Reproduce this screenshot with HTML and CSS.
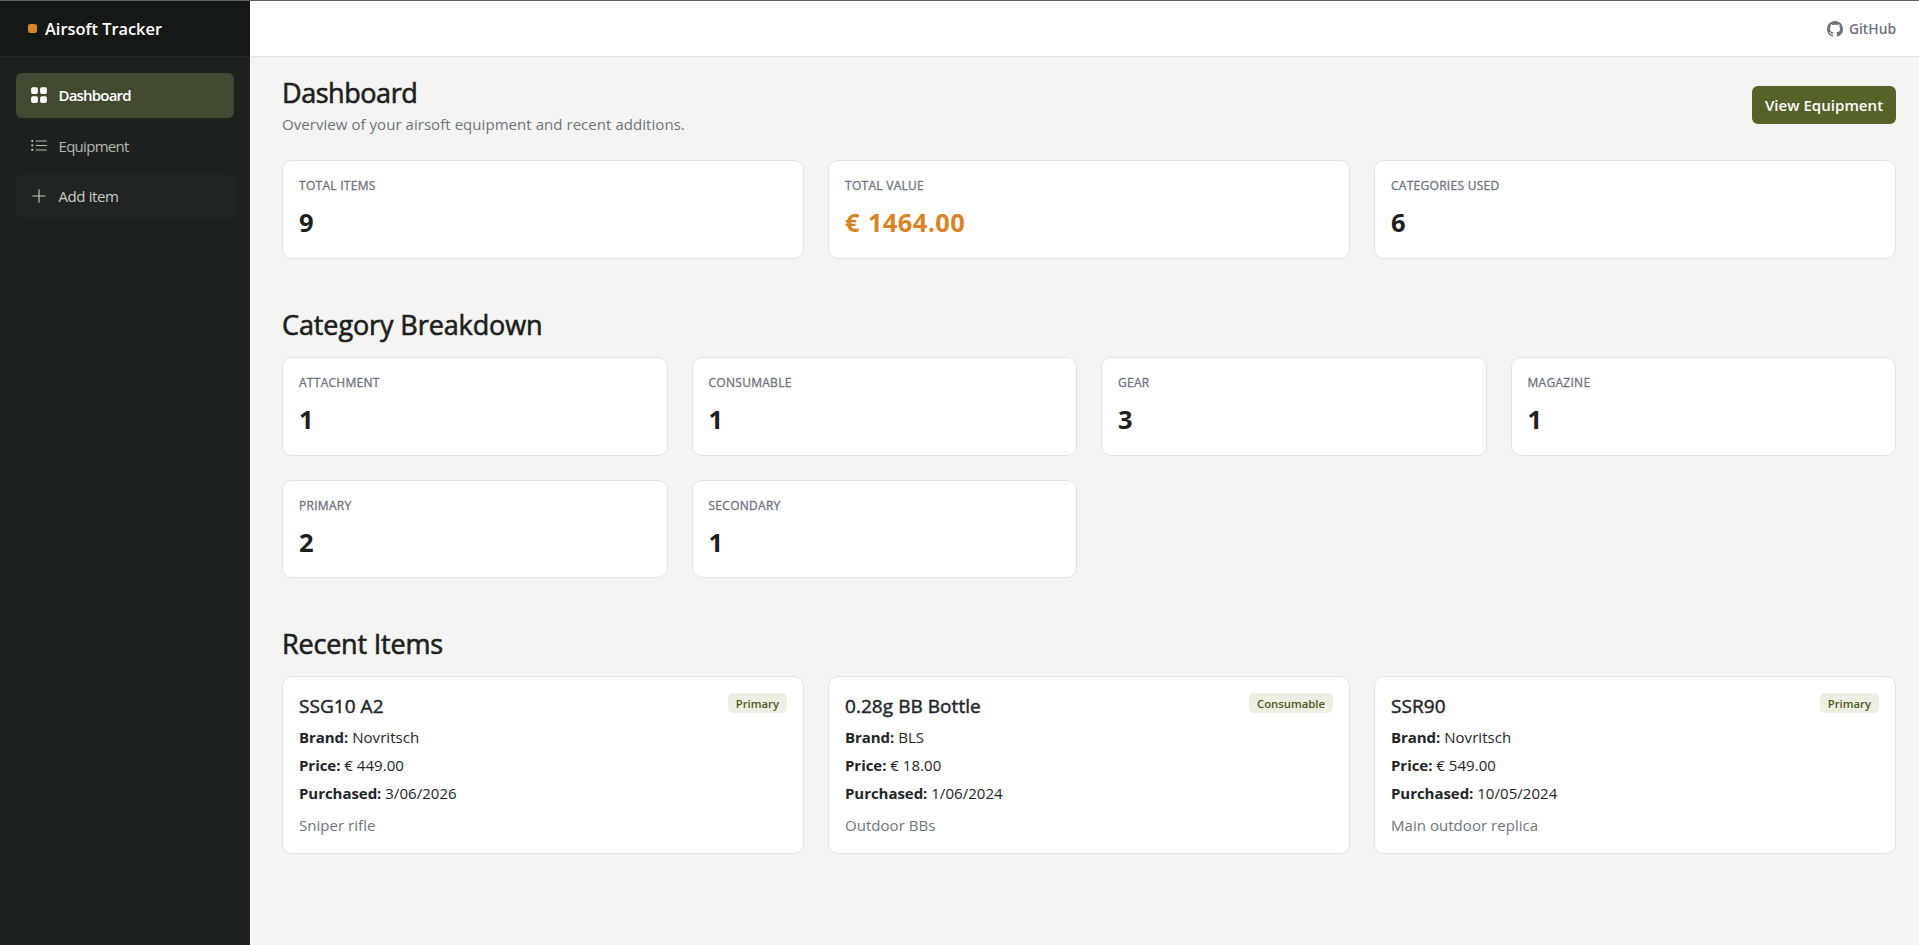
FILE: index.html
```html
<!DOCTYPE html>
<html lang="en">
<head>
<meta charset="utf-8">
<title>Airsoft Tracker</title>
<link rel="stylesheet" href="styles.css">
</head>
<body>
<div class="app">
  <aside class="sidebar">
    <div class="brand"><span class="brand-mark"></span><span class="brand-name">Airsoft Tracker</span></div>
    <nav class="nav">
      <a class="nav-link active"><svg class="icon" viewBox="0 0 16 16"><path d="M1 2.5A1.5 1.5 0 0 1 2.5 1h3A1.5 1.5 0 0 1 7 2.500v3A1.500 1.500 0 0 1 5.500 7h-3A1.500 1.500 0 0 1 1 5.500zm8 0A1.500 1.500 0 0 1 10.500 1h3A1.500 1.500 0 0 1 15 2.500v3A1.500 1.500 0 0 1 13.500 7h-3A1.500 1.500 0 0 1 9 5.500zm-8 8A1.500 1.500 0 0 1 2.500 9h3A1.500 1.500 0 0 1 7 10.500v3A1.500 1.500 0 0 1 5.500 15h-3A1.500 1.500 0 0 1 1 13.500zm8 0A1.500 1.500 0 0 1 10.500 9h3a1.500 1.500 0 0 1 1.500 1.500v3a1.500 1.500 0 0 1-1.500 1.500h-3A1.500 1.500 0 0 1 9 13.500z"/></svg><span>Dashboard</span></a>
      <a class="nav-link"><svg class="icon" viewBox="0 0 16 16"><path fill-rule="evenodd" d="M5 11.500a.5.5 0 0 1 .5-.5h9a.5.5 0 0 1 0 1h-9a.5.5 0 0 1-.5-.5m0-4a.5.5 0 0 1 .5-.5h9a.5.5 0 0 1 0 1h-9a.5.5 0 0 1-.5-.5m0-4a.5.5 0 0 1 .5-.5h9a.5.5 0 0 1 0 1h-9a.5.5 0 0 1-.5-.5m-3 1a1 1 0 1 0 0-2 1 1 0 0 0 0 2m0 4a1 1 0 1 0 0-2 1 1 0 0 0 0 2m0 4a1 1 0 1 0 0-2 1 1 0 0 0 0 2"/></svg><span>Equipment</span></a>
      <a class="nav-link add"><svg class="icon" viewBox="0 0 16 16"><path fill-rule="evenodd" d="M8 2a.5.5 0 0 1 .5.5v5h5a.5.5 0 0 1 0 1h-5v5a.5.5 0 0 1-1 0v-5h-5a.5.5 0 0 1 0-1h5v-5A.5.5 0 0 1 8 2"/></svg><span>Add item</span></a>
    </nav>
  </aside>
  <div class="content">
    <header class="topbar">
      <a class="github"><svg class="icon" viewBox="0 0 16 16"><path d="M8 0C3.580 0 0 3.580 0 8c0 3.540 2.290 6.530 5.470 7.590.4.070.55-.17.55-.38 0-.19-.01-.82-.01-1.490-2.010.37-2.530-.49-2.690-.94-.09-.23-.48-.94-.82-1.130-.28-.15-.68-.52-.01-.53.63-.01 1.080.58 1.230.82.72 1.210 1.870.87 2.330.66.070-.52.28-.87.51-1.070-1.780-.2-3.640-.89-3.640-3.950 0-.87.31-1.590.82-2.150-.08-.2-.36-1.020.08-2.120 0 0 .67-.21 2.200.82.64-.18 1.320-.27 2-.27s1.360.09 2 .27c1.530-1.040 2.200-.82 2.200-.82.44 1.100.16 1.920.08 2.120.51.56.82 1.270.82 2.150 0 3.070-1.870 3.750-3.650 3.950.29.25.54.73.54 1.480 0 1.070-.01 1.930-.01 2.200 0 .21.15.46.55.38A8.010 8.010 0 0 0 16 8c0-4.420-3.580-8-8-8"/></svg><span>GitHub</span></a>
    </header>
    <main class="main">
      <div class="page-head">
        <div>
          <h1>Dashboard</h1>
          <p class="subtitle">Overview of your airsoft equipment and recent additions.</p>
        </div>
        <a class="button"><span>View Equipment</span></a>
      </div>
      <section class="grid three">
        <div class="card"><div class="label">TOTAL ITEMS</div><div class="value">9</div></div>
        <div class="card"><div class="label">TOTAL VALUE</div><div class="value accent">€ 1464.00</div></div>
        <div class="card"><div class="label">CATEGORIES USED</div><div class="value">6</div></div>
      </section>
      <h2>Category Breakdown</h2>
      <section class="grid four">
        <div class="card"><div class="label">ATTACHMENT</div><div class="value">1</div></div>
        <div class="card"><div class="label">CONSUMABLE</div><div class="value">1</div></div>
        <div class="card"><div class="label">GEAR</div><div class="value">3</div></div>
        <div class="card"><div class="label">MAGAZINE</div><div class="value">1</div></div>
        <div class="card"><div class="label">PRIMARY</div><div class="value">2</div></div>
        <div class="card"><div class="label">SECONDARY</div><div class="value">1</div></div>
      </section>
      <h2 class="recent-title">Recent Items</h2>
      <section class="grid three">
        <article class="card item">
          <div class="item-head"><h3>SSG10 A2</h3><span class="badge">Primary</span></div>
          <p><strong>Brand:</strong> Novritsch</p>
          <p><strong>Price:</strong> € 449.00</p>
          <p><strong>Purchased:</strong> 3/06/2026</p>
          <p class="note">Sniper rifle</p>
        </article>
        <article class="card item">
          <div class="item-head"><h3>0.28g BB Bottle</h3><span class="badge">Consumable</span></div>
          <p><strong>Brand:</strong> BLS</p>
          <p><strong>Price:</strong> € 18.00</p>
          <p><strong>Purchased:</strong> 1/06/2024</p>
          <p class="note">Outdoor BBs</p>
        </article>
        <article class="card item">
          <div class="item-head"><h3>SSR90</h3><span class="badge">Primary</span></div>
          <p><strong>Brand:</strong> Novritsch</p>
          <p><strong>Price:</strong> € 549.00</p>
          <p><strong>Purchased:</strong> 10/05/2024</p>
          <p class="note">Main outdoor replica</p>
        </article>
      </section>
    </main>
  </div>
</div>
</body>
</html>
```
FILE: styles.css
```css
* { box-sizing: border-box; }

body {
  margin: 0;
  height: 945px;
  overflow: hidden;
  background: #f4f4f2;
  color: #212529;
  font-family: "Open Sans", "Noto Sans", sans-serif;
  font-size: 15px;
  line-height: 24px;
}

h1, h2, h3, p { margin: 0; }

.app {
  display: flex;
  height: 945px;
  border-top: 1px solid #5f5f5f;
}

.icon {
  width: 16px;
  height: 16px;
  flex: none;
  fill: currentColor;
}

/* Sidebar */
.sidebar {
  width: 250px;
  flex: none;
  background: #1e221e;
}

.brand {
  display: flex;
  align-items: center;
  gap: 8px;
  height: 56px;
  padding-left: 28px;
  background: #151915;
  border-bottom: 1px solid #252a26;
  color: #fff;
  font-size: 16.4px;
  font-weight: 600;
}

.brand-mark {
  width: 9px;
  height: 9px;
  border-radius: 2px;
  background: #d98324;
}

.nav {
  display: flex;
  flex-direction: column;
  gap: 5.6px;
  padding: 16px;
}

.nav-link {
  display: flex;
  align-items: center;
  gap: 10.5px;
  height: 44.8px;
  padding: 0 14px;
  border-radius: 6px;
  color: #b3b8b1;
  letter-spacing: -0.7px;
}

.nav-link .icon {
  width: 18px;
  height: 18px;
}

.nav-link.active {
  background: #414a30;
  color: #fff;
  font-weight: 600;
  letter-spacing: -0.8px;
}

.nav-link.add {
  background: #202521;
  color: #c9cdc7;
  letter-spacing: -0.4px;
}

/* Header */
.content { flex: 1; }

.topbar {
  display: flex;
  align-items: center;
  justify-content: flex-end;
  height: 56px;
  padding-right: 23px;
  background: #fff;
  border-bottom: 1px solid #e4e4df;
}

.github {
  display: flex;
  align-items: center;
  gap: 6px;
  color: #6b7280;
  font-size: 13.8px;
  font-weight: 600;
}

/* Page */
.main { padding: 16px 23px 0 32px; }

.page-head {
  display: flex;
  justify-content: space-between;
  height: 87px;
}

h1, h2 {
  color: #1c211d;
  font-size: 27px;
  font-weight: 400;
  line-height: 40px;
  letter-spacing: -0.1px;
  -webkit-text-stroke: 0.6px currentColor;
}

h1 { letter-spacing: -0.45px; }

.subtitle {
  margin-top: -1px;
  color: #6c757d;
  letter-spacing: 0.05px;
}

.button {
  display: flex;
  align-items: center;
  justify-content: center;
  width: 144px;
  height: 38px;
  margin-top: 13px;
  border-radius: 6px;
  background: #556329;
  color: #fff;
  font-size: 15.1px;
  font-weight: 600;
}

.grid {
  display: grid;
  gap: 24px;
}

.three { grid-template-columns: repeat(3, 1fr); }
.four { grid-template-columns: repeat(4, 1fr); }

.card {
  height: 98.5px;
  padding: 13px 16px;
  border: 1px solid #e4e4df;
  border-radius: 10px;
  background: #fff;
}

.label {
  color: #6b7280;
  font-size: 12px;
  letter-spacing: 0.28px;
  -webkit-text-stroke: 0.3px currentColor;
}

.value {
  margin-top: 6px;
  color: #1c211d;
  font-size: 25.5px;
  font-weight: 700;
  line-height: 36px;
  letter-spacing: 0.35px;
  word-spacing: 1px;
}

.accent { color: #d98324; }

h2 {
  height: 98.5px;
  padding-top: 46px;
}

.recent-title {
  height: 97.5px;
  letter-spacing: -0.2px;
}

.card.item {
  height: 178px;
  padding: 16px;
}

.item-head {
  display: flex;
  justify-content: space-between;
  align-items: flex-start;
  height: 32px;
}

h3 {
  font-size: 19px;
  font-weight: 400;
  line-height: 26px;
  letter-spacing: 0.05px;
  -webkit-text-stroke: 0.45px currentColor;
}

.badge {
  height: 20px;
  padding: 0 8px;
  border-radius: 5px;
  background: #edefe2;
  color: #4b5a23;
  font-size: 11.3px;
  font-weight: 600;
  line-height: 21px;
}

.item p {
  margin-bottom: 4px;
  letter-spacing: 0.04px;
}

.item strong { letter-spacing: -0.05px; }

.item .note {
  margin-top: 8px;
  color: #6c757d;
}
```
